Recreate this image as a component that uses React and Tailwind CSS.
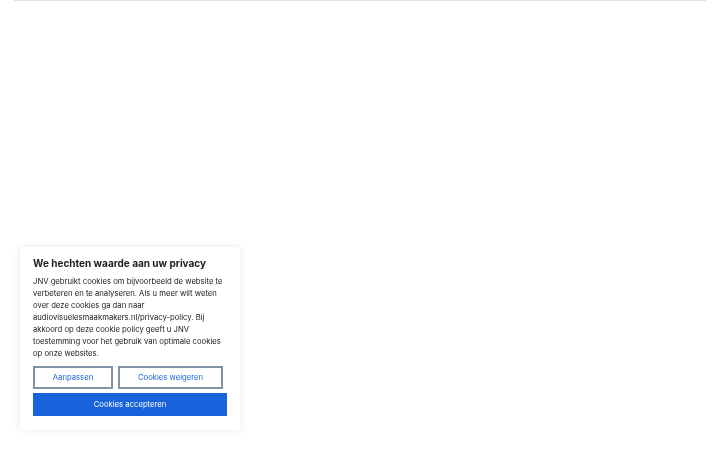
const font = { fontFamily: 'Inter, "Open Sans", "Liberation Sans", sans-serif' }

function CookieBanner() {
  return (
    <div className="fixed left-[20px] top-[247px] w-[220px] bg-white rounded-[2px] shadow-[0_0_8px_rgba(0,0,0,0.09)] px-[13px] pt-[8px] pb-[14px]">
      <h2 className="text-[10px] leading-[16px] font-bold text-[#212121]">
        We hechten waarde aan uw privacy
      </h2>
      <p className="mt-[5px] text-[7.7px] leading-[12px] text-[#212121]">
        JNV gebruikt cookies om bijvoorbeeld de website te verbeteren en te analyseren. Als u meer wilt weten
        over deze cookies ga dan naar audiovisuelesmaakmakers.nl/privacy-policy. Bij akkoord op deze cookie
        policy geeft u JNV toestemming voor het gebruik van optimale cookies op onze websites.
      </p>
      <div className="mt-[6px] flex gap-[5px] pr-[4px]">
        <button className="w-[80px] h-[23px] border-2 border-[#8293a8] text-[#1863dc] text-[7.7px] bg-white">
          Aanpassen
        </button>
        <button className="flex-1 h-[23px] border-2 border-[#8293a8] text-[#1863dc] text-[7.7px] bg-white">
          Cookies weigeren
        </button>
      </div>
      <button className="mt-[4px] w-full h-[23px] bg-[#1863dc] border-2 border-[#1863dc] text-white text-[7.7px]">
        Cookies accepteren
      </button>
    </div>
  )
}

export default function App() {
  return (
    <div className="min-h-screen w-full bg-white" style={font}>
      <header className="mx-[14px] border-b border-[#e3e3e3]" />
      <CookieBanner />
    </div>
  )
}
